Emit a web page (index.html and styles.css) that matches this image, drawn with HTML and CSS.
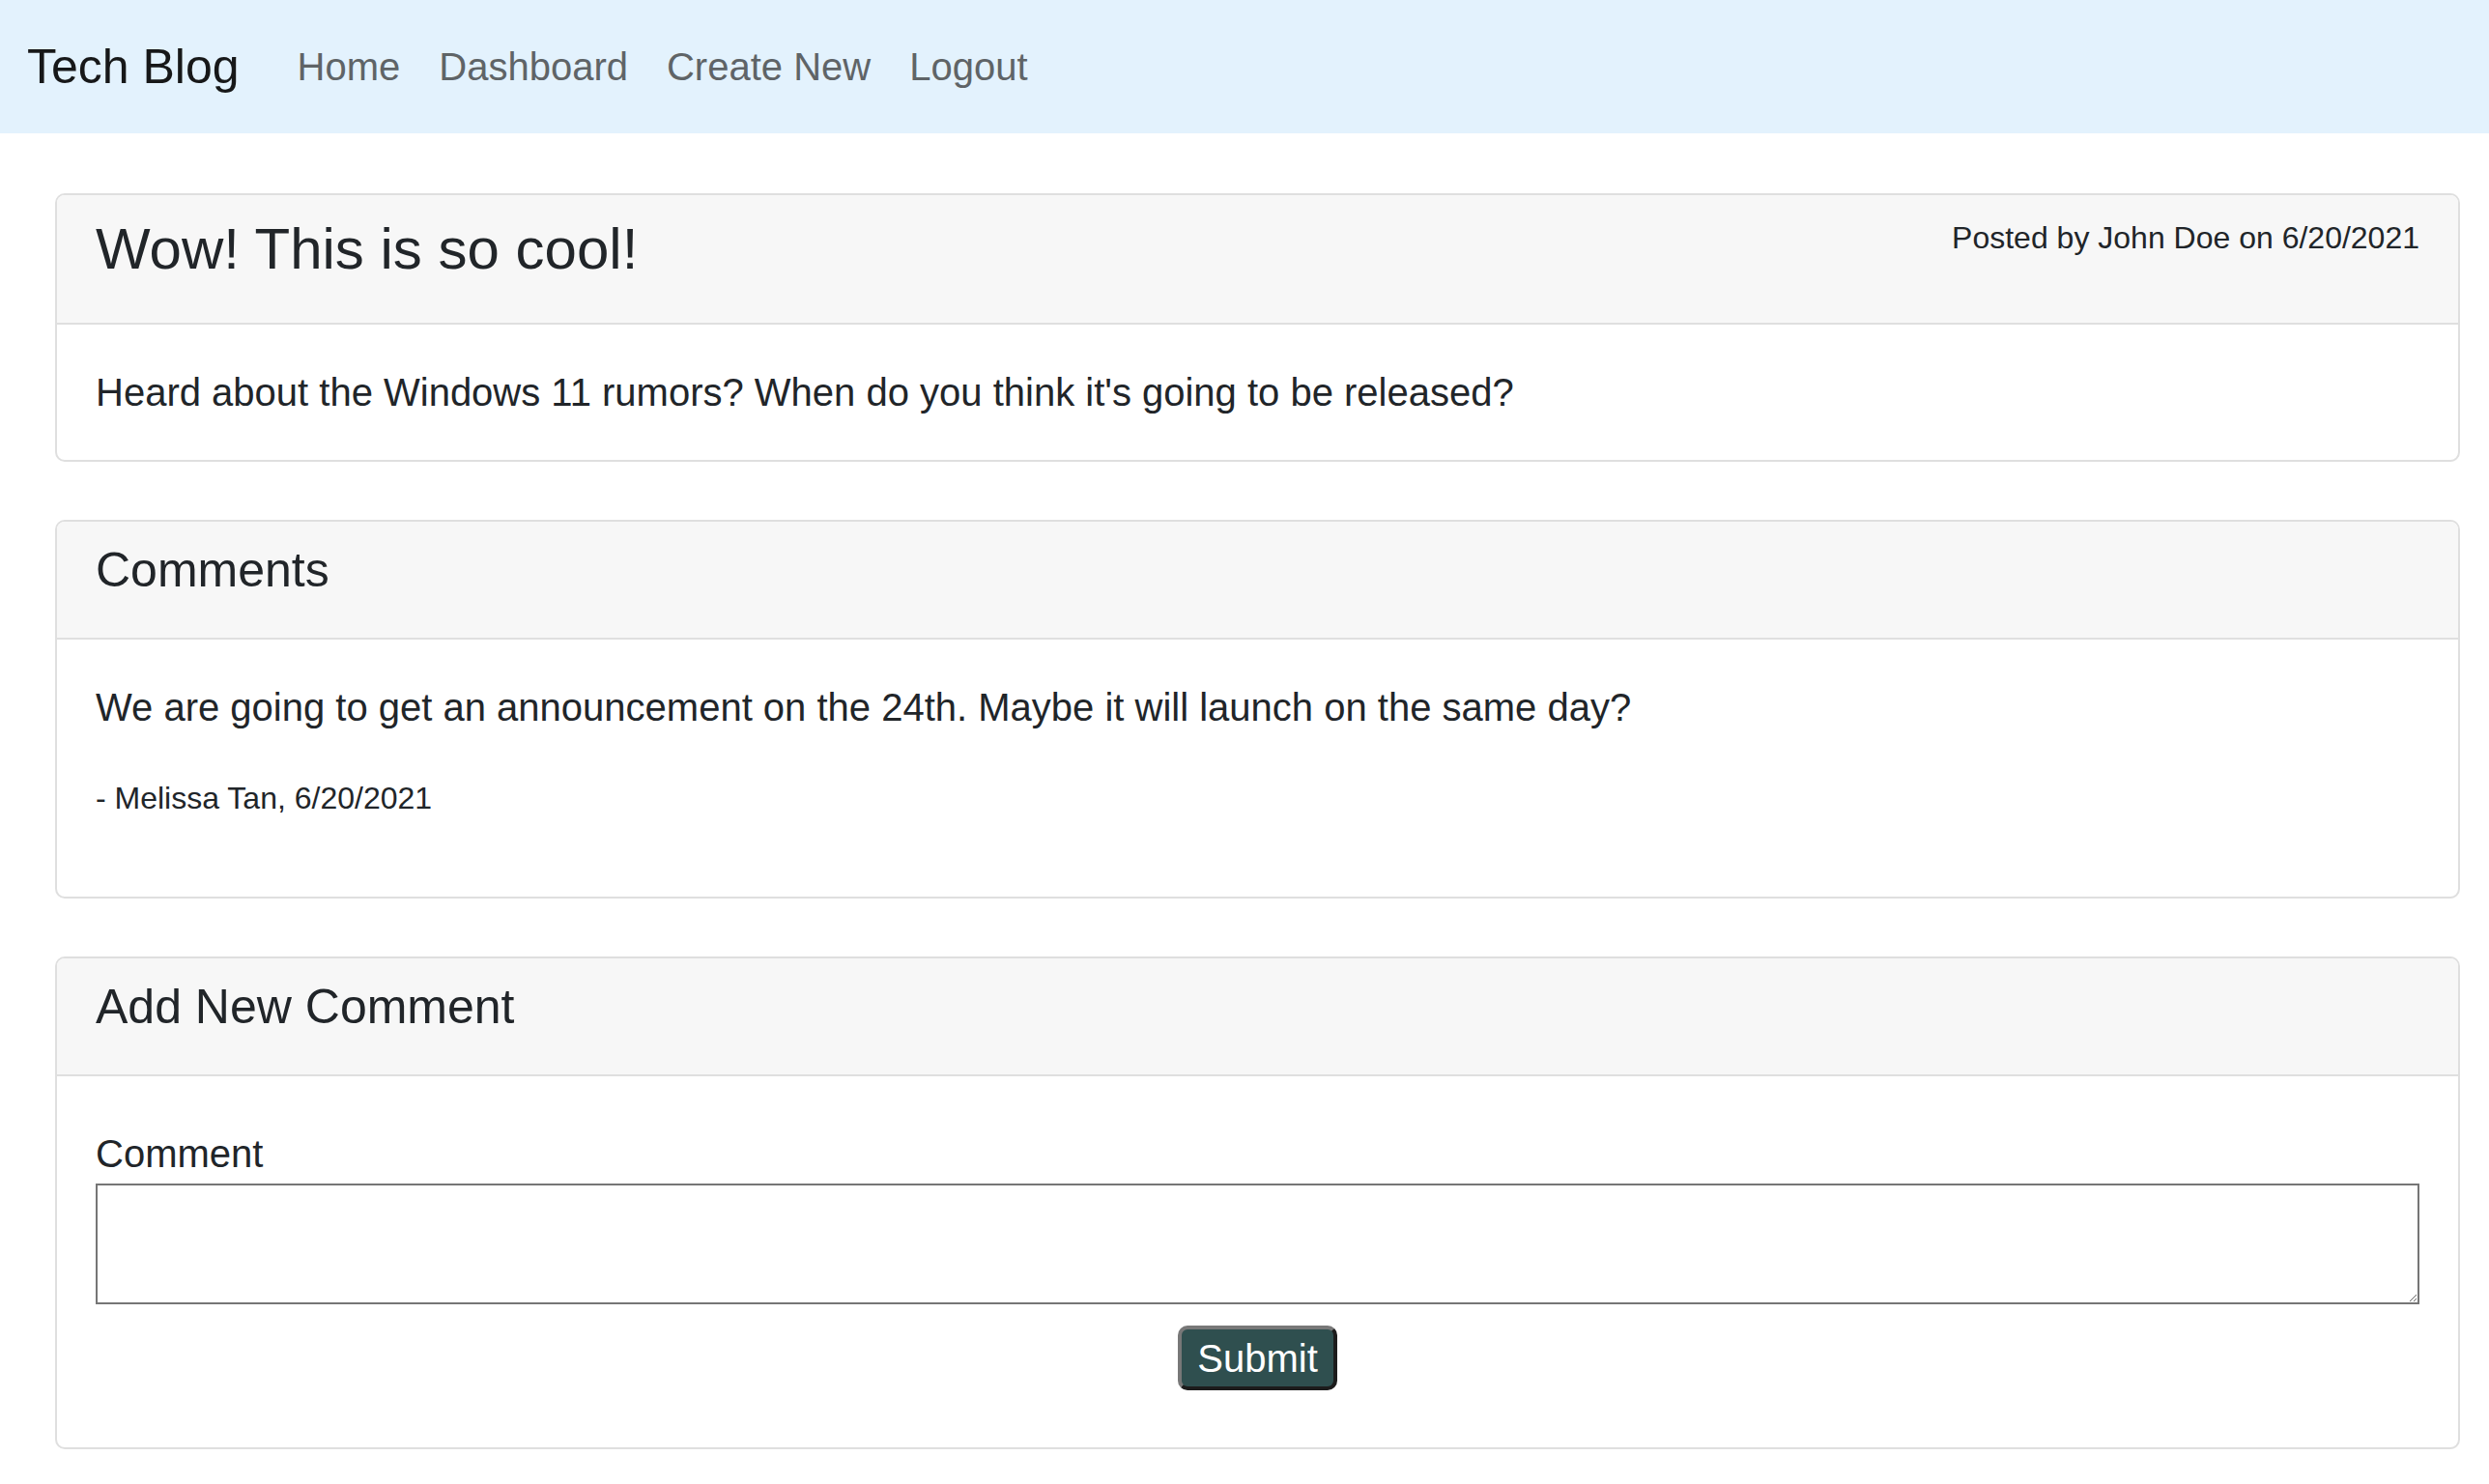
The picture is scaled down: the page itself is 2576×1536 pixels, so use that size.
FILE: index.html
```html
<!DOCTYPE html>
<html lang="en">
<head>
<meta charset="utf-8">
<title>Tech Blog</title>
<link rel="stylesheet" href="styles.css">
</head>
<body>
<nav class="navbar">
  <a class="brand" href="#">Tech Blog</a>
  <ul class="nav">
    <li><a class="nav-link" href="#">Home</a></li>
    <li><a class="nav-link" href="#">Dashboard</a></li>
    <li><a class="nav-link" href="#">Create New</a></li>
    <li><a class="nav-link" href="#">Logout</a></li>
  </ul>
</nav>
<main class="main">
  <section class="card">
    <header class="card-header">
      <span class="meta">Posted by John Doe on 6/20/2021</span>
      <h2 class="post-title">Wow! This is so cool!</h2>
    </header>
    <div class="card-body">
      <p class="text">Heard about the Windows 11 rumors? When do you think it's going to be released?</p>
    </div>
  </section>

  <section class="card">
    <header class="card-header">
      <h3 class="section-title">Comments</h3>
    </header>
    <div class="card-body">
      <p class="text comment-text">We are going to get an announcement on the 24th. Maybe it will launch on the same day?</p>
      <p class="author">- Melissa Tan, 6/20/2021</p>
    </div>
  </section>

  <section class="card">
    <header class="card-header">
      <h3 class="section-title">Add New Comment</h3>
    </header>
    <div class="card-body">
      <form class="comment-form">
        <label class="label" for="comment">Comment</label>
        <textarea id="comment" class="textarea"></textarea>
        <div class="actions">
          <button type="submit" class="btn">Submit</button>
        </div>
      </form>
    </div>
  </section>
</main>
</body>
</html>
```
FILE: styles.css
```css
* { box-sizing: border-box; }

html, body {
  margin: 0;
  padding: 0;
  background: #ffffff;
}

body {
  font-family: "Liberation Sans", Arial, sans-serif;
  color: #212529;
  font-size: 40px;
  line-height: 1.5;
}

.navbar {
  height: 138px;
  background: #e3f2fd;
  display: flex;
  align-items: center;
  padding-left: 28px;
}

.brand {
  font-size: 50px;
  line-height: 75px;
  color: #171819;
  text-decoration: none;
  margin-right: 40px;
}

.nav {
  display: flex;
  list-style: none;
  margin: 0;
  padding: 0;
}

.nav-link {
  display: block;
  font-size: 40px;
  line-height: 60px;
  padding: 0 20px;
  color: #5f6467;
  text-decoration: none;
}

.main {
  padding: 62px 30px 0 57px;
}

.card {
  border: 2px solid #dfdfdf;
  border-radius: 10px;
  margin-bottom: 60px;
  overflow: hidden;
  background: #fff;
}

.card-header {
  background: #f7f7f7;
  border-bottom: 2px solid #dfdfdf;
  padding: 20px 40px;
}

.meta {
  float: right;
  font-size: 32px;
  line-height: 48px;
  color: #212529;
}

.post-title {
  margin: 0 0 20px;
  font-weight: 400;
  font-size: 60px;
  line-height: 72px;
}

.section-title {
  margin: 0 0 20px;
  font-weight: 400;
  font-size: 50px;
  line-height: 60px;
}

.card-body {
  padding: 40px;
}

.text {
  margin: 0;
  font-size: 40px;
  line-height: 60px;
}

.comment-text {
  margin-bottom: 40px;
}

.author {
  margin: 0 0 38px;
  font-size: 32px;
  line-height: 48px;
}

.comment-form {
  margin: 10px 0 19px;
}

.label {
  display: block;
  font-size: 40px;
  line-height: 60px;
}

.textarea {
  display: block;
  width: 100%;
  height: 125px;
  border: 2px solid #767676;
  border-radius: 0;
  margin: 1px 0 0;
  padding: 4px;
  font-family: "Liberation Mono", monospace;
  font-size: 26px;
  background: #fff;
}

.actions {
  text-align: center;
  margin-top: 22px;
}

.btn {
  font-family: "Liberation Sans", Arial, sans-serif;
  font-size: 40px;
  line-height: 46px;
  padding: 6.5px 16px;
  color: #ffffff;
  background: #2f4f4f;
  border-style: solid;
  border-width: 4px;
  border-color: #787878 #1c1c1c #1c1c1c #787878;
  border-radius: 10px;
  cursor: pointer;
}
```
